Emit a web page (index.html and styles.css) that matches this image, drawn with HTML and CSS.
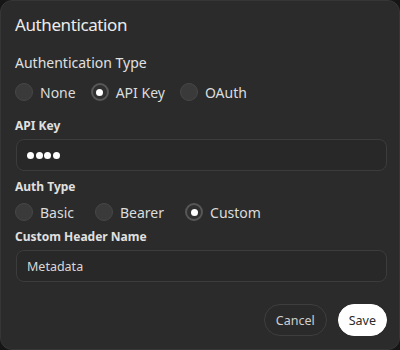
FILE: index.html
```html
<!DOCTYPE html>
<html lang="en">
<head>
    <meta charset="UTF-8">
    <meta name="viewport" content="width=device-width, initial-scale=1.0">
    <title>Authentication</title>
    <link rel="stylesheet" href="styles.css">
</head>
<body>

<div class="dialog">
    <h1 class="dialog-title">Authentication</h1>

    <div class="section-label">Authentication Type</div>
    <div class="radio-row">
        <label class="radio"><span class="radio-dot"></span>None</label>
        <label class="radio"><span class="radio-dot checked"></span>API Key</label>
        <label class="radio"><span class="radio-dot"></span>OAuth</label>
    </div>

    <div class="field-label first">API Key</div>
    <div class="input password">
        <span class="pw-dot"></span><span class="pw-dot"></span><span class="pw-dot"></span><span class="pw-dot"></span>
    </div>

    <div class="field-label">Auth Type</div>
    <div class="radio-row small">
        <label class="radio"><span class="radio-dot"></span>Basic</label>
        <label class="radio"><span class="radio-dot"></span>Bearer</label>
        <label class="radio"><span class="radio-dot checked"></span>Custom</label>
    </div>

    <div class="field-label">Custom Header Name</div>
    <div class="input">Metadata</div>

    <div class="actions">
        <button class="btn btn-cancel">Cancel</button>
        <button class="btn btn-save">Save</button>
    </div>
</div>

</body>
</html>
```

FILE: styles.css
```css
body {
    margin: 0;
    padding: 0;
    background-color: #161616;
    font-family: "Noto Sans", "Open Sans", sans-serif;
    color: #e6e6e6;
}

.dialog {
    box-sizing: border-box;
    width: 400px;
    height: 350px;
    padding: 13px 12px 0 14px;
    background-color: #2b2b2b;
    border: 1px solid #363636;
    border-radius: 12px;
    display: flex;
    flex-direction: column;
}

.dialog-title {
    margin: 0;
    font-size: 17px;
    font-weight: normal;
    letter-spacing: -0.4px;
    line-height: 22px;
    color: #ececec;
}

.section-label {
    margin-top: 18px;
    font-size: 14px;
    line-height: 18px;
    color: #e0e0e0;
}

.radio-row {
    display: flex;
    gap: 15px;
    margin-top: 9px;
    height: 22px;
    align-items: center;
}

.radio-row.small {
    gap: 21px;
    margin-top: 6px;
}

.radio {
    display: flex;
    align-items: center;
    gap: 7px;
    font-size: 14px;
    color: #dcdcdc;
}

.radio-dot {
    box-sizing: border-box;
    width: 18px;
    height: 18px;
    border-radius: 50%;
    background-color: #3a3a3a;
    border: 1px solid #474747;
}

.radio-dot.checked {
    background-color: #303030;
    border: 2px solid #575757;
    display: flex;
    align-items: center;
    justify-content: center;
}

.radio-dot.checked::after {
    content: "";
    width: 7px;
    height: 7px;
    border-radius: 50%;
    background-color: #ffffff;
}

.field-label {
    margin-top: 8px;
    font-size: 12px;
    font-weight: bold;
    line-height: 16px;
    color: #e0e0e0;
}

.field-label.first {
    margin-top: 15px;
}

.radio-row + .field-label {
    margin-top: 6px;
}

.radio-row + .field-label.first {
    margin-top: 15px;
}

.input {
    box-sizing: border-box;
    height: 32px;
    margin-top: 4px;
    margin-left: 1px;
    padding: 0 10px;
    border: 1px solid #3c3c3c;
    border-radius: 8px;
    background-color: #282828;
    display: flex;
    align-items: center;
    font-size: 12.5px;
    color: #d8d8d8;
}

.field-label + .input {
    margin-top: 4px;
}

.radio-row + .field-label + .input {
    margin-top: 5px;
}

.input.password {
    gap: 1.5px;
}

.pw-dot {
    width: 7px;
    height: 7px;
    border-radius: 50%;
    background-color: #ffffff;
}

.actions {
    display: flex;
    justify-content: flex-end;
    gap: 11px;
    margin-top: 22px;
}

.btn {
    box-sizing: border-box;
    height: 32px;
    border-radius: 16px;
    font-family: inherit;
    font-size: 12.5px;
    padding: 0 11px;
}

.btn-cancel {
    background-color: #2a2a2a;
    border: 1px solid #3e3e3e;
    color: #cfcfcf;
}

.btn-save {
    background-color: #ffffff;
    border: 1px solid #ffffff;
    color: #2b2b2b;
    padding: 0 10px;
}
```
